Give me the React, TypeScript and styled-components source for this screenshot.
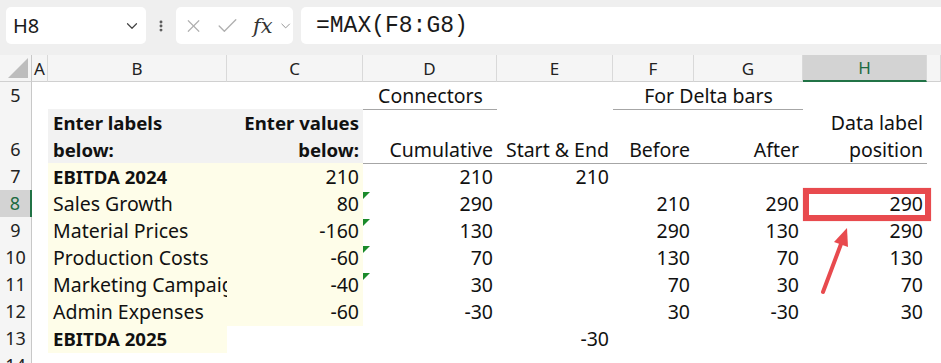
import React from "react";
import styled, { createGlobalStyle, css } from "styled-components";
import { ChevronDown, X, Check, EllipsisVertical } from "lucide-react";

const GlobalStyle = createGlobalStyle`
  html, body {
    margin: 0;
    padding: 0;
    background: #ffffff;
  }
  body {
    font-family: "Noto Sans", "Open Sans", Arial, sans-serif;
    color: #111;
    overflow: hidden;
  }
`;

const COLS = "32px 16px 179px 136px 134px 116px 81px 109px 124px 1fr";

type Align = "left" | "right" | "center";

interface CellType {
  text?: string;
  align?: Align;
  bold?: boolean;
  fill?: "gray" | "yellow";
  underline?: boolean;
  span?: number;
  flag?: boolean;
  marked?: boolean;
  clip?: boolean;
}

interface RowType {
  num: string;
  height: number;
  active?: boolean;
  cells: CellType[];
}

const Page = styled.div`
  width: 941px;
  height: 363px;
  overflow: hidden;
  display: flex;
  flex-direction: column;
`;

const Toolbar = styled.div`
  display: flex;
  align-items: center;
  gap: 8px;
  height: 55px;
  padding: 7px 0 11px 6px;
  box-sizing: border-box;
  background: #efefef;
`;

const Box = styled.div<{ $w?: number }>`
  display: flex;
  align-items: center;
  height: 37px;
  background: #ffffff;
  border-radius: 5px;
  box-sizing: border-box;
  ${(p) =>
    p.$w
      ? css`
          width: ${p.$w}px;
          flex: none;
        `
      : css`
          flex: 1;
          border-radius: 5px 0 0 5px;
        `}
`;

const NameText = styled.span`
  flex: 1;
  padding-left: 7px;
  font-size: 20px;
  color: #1a1a1a;
`;

const Dots = styled.div`
  display: flex;
  align-items: center;
  justify-content: center;
  width: 14px;
  color: #555;
`;

const FxBox = styled(Box)`
  gap: 11px;
  padding-left: 7px;
  color: #b0b0b0;
`;

const Fx = styled.span`
  font-family: "DejaVu Serif", "Liberation Serif", serif;
  font-style: italic;
  font-size: 21px;
  color: #333;
  margin-left: 2px;
  margin-right: -6px;
`;

const Formula = styled.span`
  padding-left: 15px;
  font-family: "Liberation Mono", "DejaVu Sans Mono", monospace;
  font-size: 23px;
  color: #1a1a1a;
`;

const Sheet = styled.div`
  position: relative;
  flex: 1;
  display: flex;
  flex-direction: column;
`;

const SheetRow = styled.div<{ $h: number }>`
  display: grid;
  grid-template-columns: ${COLS};
  height: ${(p) => p.$h}px;
  flex: none;
`;

const ColHead = styled.div<{ $active?: boolean }>`
  display: flex;
  align-items: center;
  justify-content: center;
  font-size: 17px;
  background: ${(p) => (p.$active ? "#d3d3d3" : "#f5f5f5")};
  border-right: 1px solid #d9d9d9;
  border-bottom: ${(p) => (p.$active ? "2px solid #217346" : "1px solid #d0d0d0")};
  color: ${(p) => (p.$active ? "#1d6b42" : "#222")};
  box-sizing: border-box;
`;

const Corner = styled.div`
  position: relative;
  background: #f5f5f5;
  border-right: 1px solid #c8c8c8;
  border-bottom: 1px solid #d0d0d0;
  box-sizing: border-box;
  &::after {
    content: "";
    position: absolute;
    right: 3px;
    bottom: 3px;
    width: 0;
    height: 0;
    border-left: 20px solid transparent;
    border-bottom: 20px solid #bdbdbd;
  }
`;

const RowHead = styled.div<{ $active?: boolean }>`
  display: flex;
  align-items: flex-end;
  justify-content: center;
  font-size: 18px;
  line-height: 27px;
  background: ${(p) => (p.$active ? "#d3d3d3" : "#f5f5f5")};
  color: ${(p) => (p.$active ? "#1d6b42" : "#222")};
  border-right: ${(p) => (p.$active ? "2px solid #217346" : "1px solid #c8c8c8")};
  border-bottom: 1px solid #dadada;
  box-sizing: border-box;
`;

const Cell = styled.div<{
  $align: Align;
  $bold?: boolean;
  $fill?: "gray" | "yellow";
  $underline?: boolean;
  $span?: number;
  $flag?: boolean;
  $marked?: boolean;
  $clip?: boolean;
}>`
  position: relative;
  display: flex;
  flex-direction: column;
  justify-content: flex-end;
  align-items: ${(p) =>
    p.$align === "right" ? "flex-end" : p.$align === "center" ? "center" : "flex-start"};
  text-align: ${(p) => p.$align};
  padding: 0 ${(p) => (p.$clip ? "0" : "4px")} 0 5px;
  font-size: ${(p) => (p.$bold ? "18.6px" : "19.5px")};
  line-height: 27px;
  white-space: nowrap;
  overflow: ${(p) => (p.$clip ? "hidden" : "visible")};
  font-weight: ${(p) => (p.$bold ? 700 : 400)};
  background: ${(p) =>
    p.$fill === "gray" ? "#f2f2f2" : p.$fill === "yellow" ? "#fefde9" : "transparent"};
  border-bottom: ${(p) => (p.$underline ? "1px solid #a6a6a6" : "1px solid transparent")};
  grid-column: span ${(p) => p.$span || 1};
  box-sizing: border-box;
  min-width: 0;
  ${(p) =>
    p.$flag &&
    css`
      &::before {
        content: "";
        position: absolute;
        left: 0;
        top: 2px;
        border-top: 7px solid #1a8a2a;
        border-right: 7px solid transparent;
      }
    `}
  ${(p) =>
    p.$marked &&
    css`
      &::after {
        content: "";
        position: absolute;
        left: 0;
        right: -4px;
        top: -2px;
        bottom: -4px;
        border: 6px solid #e84a4e;
        box-shadow: 0 0 1px rgba(200, 40, 40, 0.4);
      }
    `}
`;

const CellText = styled.span`
  display: block;
`;

const ArrowSvg = styled.svg`
  position: absolute;
  left: 810px;
  top: 165px;
  pointer-events: none;
`;

const e: CellType = {};

const rows: RowType[] = [
  {
    num: "5",
    height: 27,
    cells: [e, e, e, { text: "Connectors", align: "center", underline: true }, e, { text: "For Delta bars", align: "center", underline: true, span: 2 }, e, e],
  },
  {
    num: "6",
    height: 54,
    cells: [
      e,
      { text: "Enter labels\nbelow:", bold: true, fill: "gray" },
      { text: "Enter values\nbelow:", bold: true, fill: "gray", align: "right" },
      { text: "Cumulative", align: "right", underline: true },
      { text: "Start & End", align: "right", underline: true },
      { text: "Before", align: "right", underline: true },
      { text: "After", align: "right", underline: true },
      { text: "Data label\nposition", align: "right", underline: true },
      e,
    ],
  },
  {
    num: "7",
    height: 27,
    cells: [e, { text: "EBITDA 2024", bold: true, fill: "yellow" }, { text: "210", align: "right", fill: "yellow" }, { text: "210", align: "right" }, { text: "210", align: "right" }, e, e, e, e],
  },
  {
    num: "8",
    height: 27,
    active: true,
    cells: [e, { text: "Sales Growth", fill: "yellow" }, { text: "80", align: "right", fill: "yellow" }, { text: "290", align: "right", flag: true }, e, { text: "210", align: "right" }, { text: "290", align: "right" }, { text: "290", align: "right", marked: true }, e],
  },
  {
    num: "9",
    height: 27,
    cells: [e, { text: "Material Prices", fill: "yellow" }, { text: "-160", align: "right", fill: "yellow" }, { text: "130", align: "right", flag: true }, e, { text: "290", align: "right" }, { text: "130", align: "right" }, { text: "290", align: "right" }, e],
  },
  {
    num: "10",
    height: 27,
    cells: [e, { text: "Production Costs", fill: "yellow" }, { text: "-60", align: "right", fill: "yellow" }, { text: "70", align: "right", flag: true }, e, { text: "130", align: "right" }, { text: "70", align: "right" }, { text: "130", align: "right" }, e],
  },
  {
    num: "11",
    height: 27,
    cells: [e, { text: "Marketing Campaign", fill: "yellow", clip: true }, { text: "-40", align: "right", fill: "yellow" }, { text: "30", align: "right", flag: true }, e, { text: "70", align: "right" }, { text: "30", align: "right" }, { text: "70", align: "right" }, e],
  },
  {
    num: "12",
    height: 27,
    cells: [e, { text: "Admin Expenses", fill: "yellow" }, { text: "-60", align: "right", fill: "yellow" }, { text: "-30", align: "right" }, e, { text: "30", align: "right" }, { text: "-30", align: "right" }, { text: "30", align: "right" }, e],
  },
  {
    num: "13",
    height: 27,
    cells: [e, { text: "EBITDA 2025", bold: true, fill: "yellow" }, e, e, { text: "-30", align: "right" }, e, e, e, e],
  },
  { num: "14", height: 27, cells: [e, e, e, e, e, e, e, e, e] },
];

const colLetters = ["A", "B", "C", "D", "E", "F", "G", "H", ""];

function App() {
  return (
    <>
      <GlobalStyle />
      <Page>
        <Toolbar>
          <Box $w={140}>
            <NameText>H8</NameText>
            <ChevronDown size={18} strokeWidth={1.6} color="#444" style={{ marginRight: 5 }} />
          </Box>
          <Dots>
            <EllipsisVertical size={20} strokeWidth={3} />
          </Dots>
          <FxBox $w={117}>
            <X size={22} strokeWidth={1.3} />
            <Check size={26} strokeWidth={1.3} />
            <Fx>fx</Fx>
            <ChevronDown size={16} strokeWidth={1.4} color="#888" />
          </FxBox>
          <Box>
            <Formula>=MAX(F8:G8)</Formula>
          </Box>
        </Toolbar>
        <Sheet>
          <SheetRow $h={27}>
            <Corner />
            {colLetters.map((l, i) => (
              <ColHead key={i} $active={l === "H"}>
                {l}
              </ColHead>
            ))}
          </SheetRow>
          {rows.map((row) => (
            <SheetRow key={row.num} $h={row.height}>
              <RowHead $active={row.active}>{row.num}</RowHead>
              {row.cells.map((c, i) => (
                <Cell
                  key={i}
                  $align={c.align || "left"}
                  $bold={c.bold}
                  $fill={c.fill}
                  $underline={c.underline}
                  $span={c.span}
                  $flag={c.flag}
                  $marked={c.marked}
                  $clip={c.clip}
                >
                  {c.text &&
                    c.text.split("\n").map((line, j) => <CellText key={j}>{line}</CellText>)}
                </Cell>
              ))}
            </SheetRow>
          ))}
          <ArrowSvg width="50" height="80" viewBox="0 0 50 80">
            <line x1="13" y1="72" x2="31" y2="24" stroke="#e84a4e" strokeWidth="4" strokeLinecap="round" />
            <polygon points="37,8 38,27 24,22" fill="#e84a4e" />
          </ArrowSvg>
        </Sheet>
      </Page>
    </>
  );
}

export default App;
